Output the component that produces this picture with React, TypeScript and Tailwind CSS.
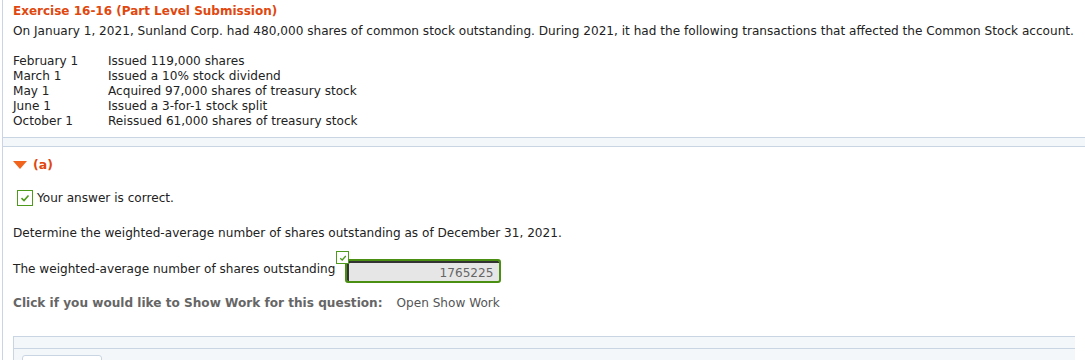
const rows = [
  ['February 1', 'Issued 119,000 shares'],
  ['March 1', 'Issued a 10% stock dividend'],
  ['May 1', 'Acquired 97,000 shares of treasury stock'],
  ['June 1', 'Issued a 3-for-1 stock split'],
  ['October 1', 'Reissued 61,000 shares of treasury stock'],
];

function Check({ size = 10 }: { size?: number }) {
  return (
    <svg width={size} height={size} viewBox="0 0 10 10" fill="none" stroke="#4e9a1c" strokeWidth="1.6">
      <polyline points="1.5,5.2 4,7.5 8.5,2.5" />
    </svg>
  );
}

export default function App() {
  return (
    <div
      className="h-[360px] w-full overflow-hidden bg-white text-[12.1px] text-[#222]"
      style={{ fontFamily: '"DejaVu Sans", Verdana, sans-serif' }}
    >
      <div className="ml-[2px] h-full border-l border-[#c9d5e2] bg-[#f4f7fa]">
        {/* Problem statement */}
        <div className="h-[138px] border-b border-[#c9d5e2] bg-white px-[10px] pt-[3px]">
          <h1 className="text-[12px] font-bold leading-[17px] text-[#e0480f]">
            Exercise 16-16 (Part Level Submission)
          </h1>
          <p className="mt-[4px] leading-[15px]">
            On January 1, 2021, Sunland Corp. had 480,000 shares of common stock outstanding. During 2021, it had the following
            transactions that affected the Common Stock account.
          </p>
          <div className="mt-[15px] flex flex-col leading-[15px]">
            {rows.map(([d, t]) => (
              <div key={d} className="flex">
                <span className="w-[95px]">{d}</span>
                <span>{t}</span>
              </div>
            ))}
          </div>
        </div>

        {/* Part (a) */}
        <div className="mt-[8px] h-full border-t border-[#c9d5e2] bg-white px-[10px]">
          <div className="mt-[9px] flex items-center gap-[6px]">
            <svg width="14" height="8" viewBox="0 0 14 8">
              <polygon points="0,0 14,0 7,8" fill="#f0641e" />
            </svg>
            <span className="text-[12.5px] font-bold text-[#e0480f]">(a)</span>
          </div>

          <div className="mt-[14px] flex items-center gap-[4px] pl-[4px]">
            <span className="flex h-[16px] w-[16px] items-center justify-center border-[1.5px] border-[#4e9a1c] bg-white">
              <Check />
            </span>
            <span>Your answer is correct.</span>
          </div>

          <p className="mt-[17px]">Determine the weighted-average number of shares outstanding as of December 31, 2021.</p>

          <div className="mt-[9px] flex items-end">
            <span className="mb-[5px]">The weighted-average number of shares outstanding</span>
            <div className="relative ml-[10px] mt-[8px]">
              <span className="absolute -left-[9px] -top-[8px] z-10 flex h-[13px] w-[13px] items-center justify-center border border-[#4e9a1c] bg-white">
                <Check size={8} />
              </span>
              <div className="h-[24px] w-[156px] rounded-[3px] border-2 border-[#4b8f12] bg-[#e6e6e6] shadow-[inset_2px_2px_0_#333]">
                <div className="pr-[6px] pt-[3px] text-right text-[#666]">1765225</div>
              </div>
            </div>
          </div>

          <div className="mt-[11px] flex gap-[14px] text-[#666]">
            <span className="font-bold">Click if you would like to Show Work for this question:</span>
            <span className="text-[#555]">Open Show Work</span>
          </div>

          <div className="mt-[24px] border-t border-l border-[#c9d5e2] bg-[#f4f7fa]">
            <div className="h-[12px] border-b border-[#c9d5e2]" />
            <div className="ml-[8px] mt-[6px] h-[10px] w-[80px] rounded-t-[3px] border border-[#c9d5e2] bg-white" />
          </div>
        </div>
      </div>
    </div>
  );
}
